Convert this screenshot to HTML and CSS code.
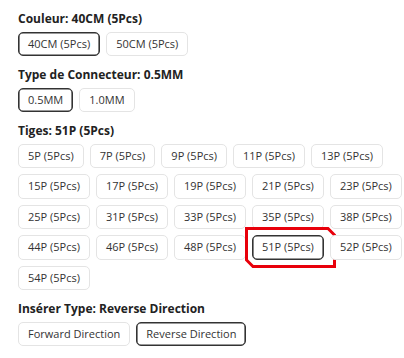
FILE: index.html
```html
<!DOCTYPE html>
<html lang="fr">
<head>
    <meta charset="UTF-8">
    <meta name="viewport" content="width=device-width, initial-scale=1.0">
    <title>Options du produit</title>
    <link rel="stylesheet" href="styles.css">
</head>
<body>

    <div class="options">
        <div class="group">
            <div class="label">Couleur: 40CM (5Pcs)</div>
            <div class="choices">
                <button class="choice active">40CM (5Pcs)</button>
                <button class="choice">50CM (5Pcs)</button>
            </div>
        </div>

        <div class="group">
            <div class="label">Type de Connecteur: 0.5MM</div>
            <div class="choices">
                <button class="choice active">0.5MM</button>
                <button class="choice">1.0MM</button>
            </div>
        </div>

        <div class="group">
            <div class="label">Tiges: 51P (5Pcs)</div>
            <div class="choices">
                <button class="choice">5P (5Pcs)</button>
                <button class="choice">7P (5Pcs)</button>
                <button class="choice">9P (5Pcs)</button>
                <button class="choice">11P (5Pcs)</button>
                <button class="choice">13P (5Pcs)</button>
                <button class="choice">15P (5Pcs)</button>
                <button class="choice">17P (5Pcs)</button>
                <button class="choice">19P (5Pcs)</button>
                <button class="choice">21P (5Pcs)</button>
                <button class="choice">23P (5Pcs)</button>
                <button class="choice">25P (5Pcs)</button>
                <button class="choice">31P (5Pcs)</button>
                <button class="choice">33P (5Pcs)</button>
                <button class="choice">35P (5Pcs)</button>
                <button class="choice">38P (5Pcs)</button>
                <button class="choice">44P (5Pcs)</button>
                <button class="choice">46P (5Pcs)</button>
                <button class="choice">48P (5Pcs)</button>
                <button class="choice active">51P (5Pcs)
                    <!-- red highlight drawn over the selected option -->
                    <svg class="highlight" width="91" height="41" viewBox="0 0 91 41">
                        <polygon points="1.5,1.5 83,1.5 89.5,8 89.5,39.5 8,39.5 1.5,33" />
                    </svg>
                </button>
                <button class="choice">52P (5Pcs)</button>
                <button class="choice">54P (5Pcs)</button>
            </div>
        </div>

        <div class="group">
            <div class="label">Insérer Type: Reverse Direction</div>
            <div class="choices">
                <button class="choice">Forward Direction</button>
                <button class="choice active">Reverse Direction</button>
            </div>
        </div>
    </div>

</body>
</html>
```

FILE: styles.css
```css
body {
    font-family: 'Open Sans', 'Noto Sans', sans-serif;
    background-color: #fff;
    color: #222;
    margin: 0;
    padding: 0;
}

.options {
    width: 386px;
    padding: 10.5px 0 0 18px;
}

.group + .group {
    margin-top: 10.5px;
}

.label {
    font-size: 12px;
    font-weight: 700;
    line-height: 16.5px;
    margin-bottom: 4.5px;
}

.choices {
    display: flex;
    flex-wrap: wrap;
    gap: 6px;
}

.choice {
    position: relative;
    background-color: #fff;
    color: #333;
    border: 1px solid #e4e4e4;
    border-radius: 5px;
    padding: 3px 9px;
    font-family: inherit;
    font-size: 11px;
    line-height: 16.5px;
    cursor: pointer;
}

.choice.active {
    border-color: #333;
    box-shadow: inset 0 0 0 0.6px #333;
}

.highlight {
    position: absolute;
    left: -8px;
    top: -9px;
    overflow: visible;
    pointer-events: none;
}

.highlight polygon {
    fill: none;
    stroke: #e8000b;
    stroke-width: 3;
}
```
